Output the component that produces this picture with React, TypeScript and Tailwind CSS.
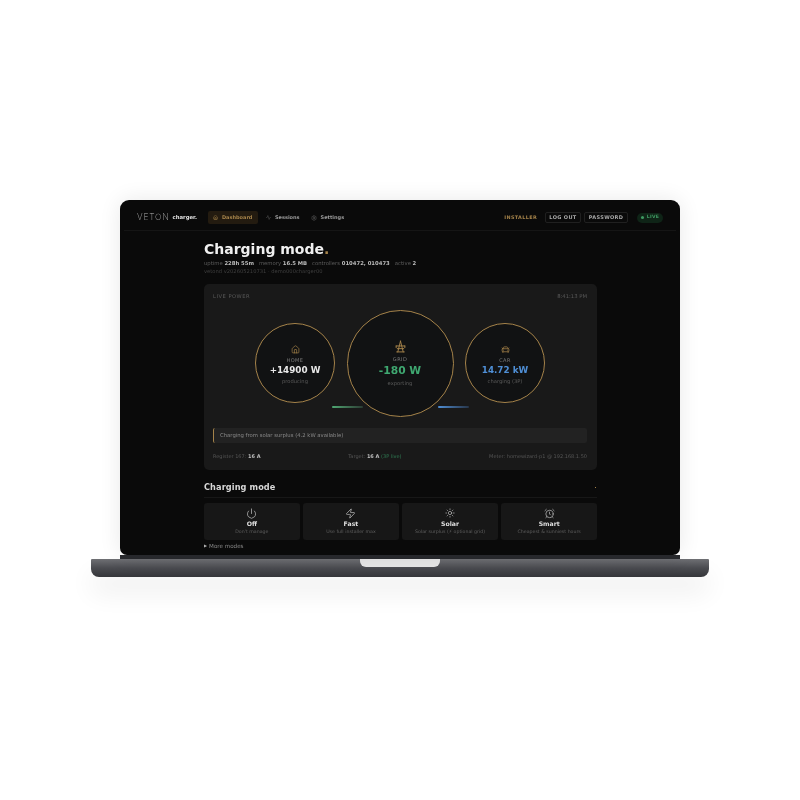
import { House, CarFront, Power, Zap, Sun, AlarmClock, Activity, Settings } from "lucide-react";

const font = { fontFamily: '"DejaVu Sans", sans-serif' };

function Pylon({ className }: { className?: string }) {
  return (
    <svg viewBox="0 0 24 24" fill="none" stroke="currentColor" strokeWidth="1.8" strokeLinecap="round" strokeLinejoin="round" className={className}>
      <path d="M12 2 7 22" />
      <path d="M12 2l5 20" />
      <path d="M4 11h16" />
      <path d="M6 16h12" />
      <path d="M5 22h14" />
      <path d="M4 11v3" />
      <path d="M20 11v3" />
    </svg>
  );
}

function Stat({ label, value }: { label: string; value: string }) {
  return (
    <span>
      {label} <b className="font-bold text-[#bdbdbd]">{value}</b>
    </span>
  );
}

function Mode({ icon, title, sub }: { icon: React.ReactNode; title: string; sub: string }) {
  return (
    <div className="flex h-[37px] flex-col items-center justify-start rounded-[3px] bg-[#171717] pt-[4px]">
      <div className="flex h-[12px] items-center text-[#bdbdbd]">{icon}</div>
      <div className="mt-[0.5px] text-[6.2px] leading-[8px] font-bold text-[#dedede]">{title}</div>
      <div className="text-[4.7px] leading-[7px] text-[#5f5f5f]">{sub}</div>
    </div>
  );
}

export default function App() {
  return (
    <div className="h-[800px] w-[800px] overflow-hidden bg-white pt-[200px]" style={font}>
      <div className="mx-auto flex w-[618px] flex-col items-center">
        {/* screen */}
        <div className="h-[355px] w-[560px] overflow-hidden rounded-t-[9px] rounded-b-[7px] bg-[#0a0a0a] shadow-[0_0_22px_rgba(0,0,0,0.09)] blur-[0.5px]">
          {/* header */}
          <div className="mx-[4px] flex h-[31px] items-center border-b border-[#151515] pt-[5px] pr-[13px] pl-[13px]">
            <span className="text-[8.5px] tracking-[0.8px] text-[#b5b5b5]" style={{ fontFamily: '"Inter", sans-serif', fontWeight: 200 }}>
              VETON
            </span>
            <span className="ml-[3px] text-[5.3px] font-bold text-[#e0e0e0]">charger.</span>
            <div className="ml-[11px] flex h-[13px] w-[50px] items-center gap-[4px] rounded-[2px] bg-[#231b10] pl-[5px] text-[5px] font-bold text-[#a5834a]">
              <House className="h-[5px] w-[5px]" strokeWidth={2.5} />
              Dashboard
            </div>
            <div className="ml-[8px] flex items-center gap-[4px] text-[5px] font-bold text-[#9a9a9a]">
              <Activity className="h-[5px] w-[5px] text-[#555]" strokeWidth={2.5} />
              Sessions
            </div>
            <div className="ml-[11px] flex items-center gap-[4px] text-[5px] font-bold text-[#9a9a9a]">
              <Settings className="h-[6px] w-[6px] text-[#555]" strokeWidth={2.5} />
              Settings
            </div>
            <div className="ml-auto text-[4.9px] font-bold tracking-[0.35px] text-[#a5834a]">INSTALLER</div>
            <div className="ml-[8px] flex h-[11px] w-[36px] items-center justify-center rounded-[2px] border border-[#202020] text-[5px] font-bold tracking-[0.35px] text-[#a8a8a8]">
              LOG OUT
            </div>
            <div className="ml-[3px] flex h-[11px] w-[44px] items-center justify-center rounded-[2px] border border-[#202020] text-[5px] font-bold tracking-[0.35px] text-[#a8a8a8]">
              PASSWORD
            </div>
            <div className="ml-[9px] flex h-[10px] w-[26px] items-center justify-center gap-[3px] rounded-full bg-[#0f2417] text-[4.6px] font-bold tracking-[0.3px] text-[#3f9a62]">
              <span className="h-[3px] w-[3px] rounded-full bg-[#3f9a62]" />
              LIVE
            </div>
          </div>

          {/* main */}
          <div className="ml-[84px] w-[393px] pt-[10px]">
            <div className="text-[14px] leading-[17px] font-bold text-[#f0f0f0]">
              Charging mode<span className="text-[#a5834a]">.</span>
            </div>
            <div className="mt-[1px] flex gap-[5px] text-[5.3px] leading-[8px] text-[#5c5c5c]">
              <Stat label="uptime" value="228h 55m" />
              <Stat label="memory" value="16.5 MB" />
              <Stat label="controllers" value="010472, 010473" />
              <Stat label="active" value="2" />
            </div>
            <div className="text-[5.2px] leading-[8px] text-[#3f3f3f]">vetond v202605210731 · demo000charger00</div>

            {/* live card */}
            <div className="mt-[9px] h-[186px] rounded-[5px] bg-[#191919] pt-[9px] pr-[10px] pl-[9px]">
              <div className="flex justify-between text-[5.2px] leading-[7px] text-[#5a5a5a]">
                <span className="tracking-[0.5px]">LIVE POWER</span>
                <span className="text-[5.3px]">8:41:13 PM</span>
              </div>
              <div className="relative mt-[9px] flex h-[108px] items-center justify-center gap-[11.5px]">
                <div className="flex h-[80px] w-[80px] flex-col items-center justify-center rounded-full border border-[#a5834a] bg-[#111213] pt-[4px]">
                  <House className="h-[9px] w-[9px] text-[#a5834a]" strokeWidth={1.8} />
                  <div className="mt-[3px] text-[5px] leading-[6px] tracking-[0.4px] text-[#7a7a7a]">HOME</div>
                  <div className="mt-[1px] text-[8.8px] leading-[13px] font-bold text-[#e8e8e8]">+14900 W</div>
                  <div className="mt-[1px] text-[5.2px] leading-[7px] text-[#5a5a5a]">producing</div>
                </div>
                <div className="flex h-[107px] w-[107px] flex-col items-center justify-center rounded-full border border-[#a5834a] bg-[#111213]">
                  <Pylon className="h-[13px] w-[13px] text-[#a5834a]" />
                  <div className="mt-[3px] text-[5px] leading-[6px] tracking-[0.4px] text-[#7a7a7a]">GRID</div>
                  <div className="mt-[1px] text-[10.7px] leading-[15px] font-bold text-[#3fa871]">-180 W</div>
                  <div className="mt-[2px] text-[5.2px] leading-[7px] text-[#5a5a5a]">exporting</div>
                </div>
                <div className="flex h-[80px] w-[80px] flex-col items-center justify-center rounded-full border border-[#a5834a] bg-[#111213] pt-[4px]">
                  <CarFront className="h-[9px] w-[9px] text-[#a5834a]" strokeWidth={2} />
                  <div className="mt-[3px] text-[5px] leading-[6px] tracking-[0.4px] text-[#7a7a7a]">CAR</div>
                  <div className="mt-[1px] text-[8.8px] leading-[13px] font-bold text-[#4f8fd6]">14.72 kW</div>
                  <div className="mt-[1px] text-[5.2px] leading-[7px] text-[#5a5a5a]">charging (3P)</div>
                </div>
                <div className="absolute top-[97px] left-[119px] h-[1.5px] w-[31px] rounded-full bg-gradient-to-r from-[#4fa873] to-[#2b3d33]" />
                <div className="absolute top-[97px] left-[225px] h-[1.5px] w-[31px] rounded-full bg-gradient-to-r from-[#4f8fd6] to-[#27364a]" />
              </div>
              <div className="mt-[11px] flex h-[15px] items-center rounded-[2px] border-l border-[#a5834a] bg-[#222222] pl-[6px] text-[5.3px] text-[#8a8a8a]">
                Charging from solar surplus (4.2 kW available)
              </div>
              <div className="mt-[9px] flex justify-between text-[5px] leading-[8px] text-[#555]">
                <span>
                  Register 167: <b className="text-[#bdbdbd]">16 A</b>
                </span>
                <span>
                  Target: <b className="text-[#bdbdbd]">16 A</b> <span className="text-[#2f7a52]">(3P live)</span>
                </span>
                <span>Meter: homewizard-p1 @ 192.168.1.50</span>
              </div>
            </div>

            {/* section */}
            <div className="mt-[10px] flex h-[18px] items-center justify-between border-b border-[#171717] pb-[2px]">
              <span className="text-[8.2px] font-bold tracking-[0.1px] text-[#d8d8d8]">Charging mode</span>
              <span className="mr-[1px] h-[1px] w-[1px] bg-[#a5834a]" />
            </div>
            <div className="mt-[5px] grid grid-cols-4 gap-[3.5px]">
              <Mode icon={<Power className="h-[11px] w-[11px]" strokeWidth={1.6} />} title="Off" sub="Don't manage" />
              <Mode icon={<Zap className="h-[11px] w-[11px]" strokeWidth={1.6} />} title="Fast" sub="Use full installer max" />
              <Mode icon={<Sun className="h-[10px] w-[10px]" strokeWidth={1.6} />} title="Solar" sub="Solar surplus (⚡ optional grid)" />
              <Mode icon={<AlarmClock className="h-[11px] w-[11px]" strokeWidth={1.6} />} title="Smart" sub="Cheapest & sunniest hours" />
            </div>
            <div className="mt-[2px] flex items-center gap-[2px] text-[5.6px] leading-[8px] text-[#8a8a8a]">
              <span className="text-[4px] text-[#b0b0b0]">▶</span> More modes
            </div>
          </div>
        </div>

        {/* hinge */}
        <div className="h-[4px] w-[560px] bg-[#2a2b2f]" />

        {/* base */}
        <div className="flex h-[18px] w-[618px] justify-center rounded-t-[1px] rounded-b-[8px] bg-gradient-to-b from-[#6f7074] via-[#4a4b50] to-[#35363a] shadow-[0_16px_26px_rgba(0,0,0,0.07)]">
          <div className="h-[8px] w-[80px] rounded-b-[6px] bg-[#e6e6e6]" />
        </div>
      </div>
    </div>
  );
}
